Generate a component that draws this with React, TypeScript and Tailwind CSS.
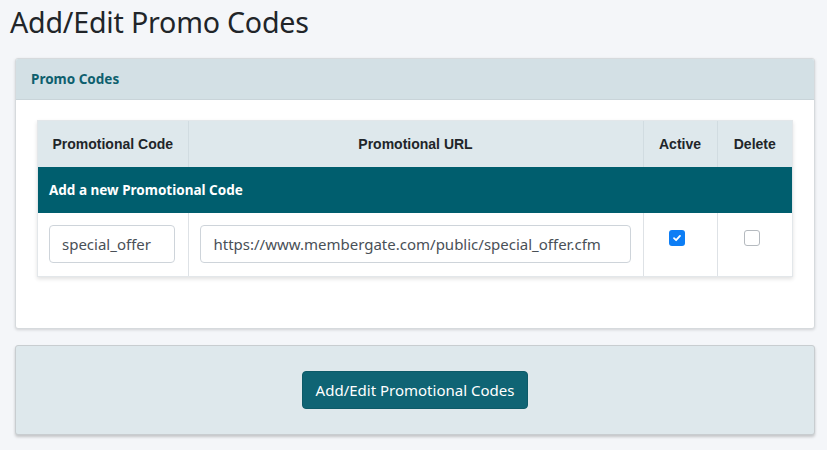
import React from "react";

const sans = { fontFamily: '"Noto Sans", "Open Sans", sans-serif' };

export default function App() {
  return (
    <div className="min-h-[450px] bg-[#f4f6f9] pt-[2px] pl-[15px] pr-[12px] pb-[14px]" style={sans}>
      <h1 className="-ml-[5px] text-[28.6px] leading-[40px] text-[#212529] tracking-[-0.2px] font-normal">Add/Edit Promo Codes</h1>

      <div className="mt-[16px] border border-[#d6dadd] rounded-[3px] bg-white shadow-[0_1px_3px_rgba(0,0,0,0.15)] overflow-hidden">
        <div className="h-[41px] bg-[#d3e0e5] border-b border-[#c9d4d9] flex items-center px-[15px]">
          <span className="text-[13.5px] font-bold text-[#0e5f6e]">Promo Codes</span>
        </div>
        <div className="px-[21px] pt-[20px] pb-[51px]">
          <div className="shadow-[0_2px_4px_rgba(0,0,0,0.12)] border border-[#e3e7ea]">
            <table className="w-full border-collapse table-fixed">
              <colgroup>
                <col className="w-[150px]" />
                <col />
                <col className="w-[74px]" />
                <col className="w-[75px]" />
              </colgroup>
              <thead>
                <tr className="h-[46px] bg-[#dee8ec] text-[#212529]" style={{ fontFamily: '"Liberation Sans", Arial, sans-serif' }}>
                  <th className="text-[14px] font-bold border-r border-[#d1dce1]">Promotional Code</th>
                  <th className="text-[14px] font-bold border-r border-[#d1dce1]">Promotional URL</th>
                  <th className="text-[14px] font-bold border-r border-[#d1dce1]">Active</th>
                  <th className="text-[14px] font-bold">Delete</th>
                </tr>
              </thead>
              <tbody>
                <tr className="h-[46px] bg-[#005e6e]">
                  <td colSpan={4} className="px-[11px] text-[13.5px] font-bold text-white">Add a new Promotional Code</td>
                </tr>
                <tr className="h-[63px] bg-white">
                  <td className="border-r border-[#dee2e6] pl-[11px] pr-[13px] align-top pt-[12px]">
                    <input
                      readOnly
                      value="special_offer"
                      className="w-full h-[38px] px-[12px] border border-[#ced4da] rounded-[4px] text-[15px] text-[#495057] outline-none"
                      style={sans}
                    />
                  </td>
                  <td className="border-r border-[#dee2e6] pl-[11px] pr-[12px] align-top pt-[12px]">
                    <input
                      readOnly
                      value="https://www.membergate.com/public/special_offer.cfm"
                      className="w-full h-[38px] px-[13px] border border-[#ced4da] rounded-[4px] text-[15px] text-[#495057] outline-none"
                      style={sans}
                    />
                  </td>
                  <td className="border-r border-[#dee2e6] align-top pt-[17px] pr-[7px]">
                    <div className="flex justify-center">
                      <span className="w-[16px] h-[16px] rounded-[3px] bg-[#0d7ef5] flex items-center justify-center">
                        <svg width="10" height="10" viewBox="0 0 10 10">
                          <path d="M2 5.2 L4.1 7.2 L8 2.9" stroke="white" strokeWidth="1.8" fill="none" strokeLinecap="round" strokeLinejoin="round" />
                        </svg>
                      </span>
                    </div>
                  </td>
                  <td className="align-top pt-[17px] pr-[6px]">
                    <div className="flex justify-center">
                      <span className="w-[16px] h-[16px] rounded-[3px] bg-white border border-[#b5babf]" />
                    </div>
                  </td>
                </tr>
              </tbody>
            </table>
          </div>
        </div>
      </div>

      <div className="mt-[16px] h-[90px] border border-[#c8cdd0] rounded-[3px] bg-[#dee8ec] shadow-[0_2px_3px_rgba(0,0,0,0.2)] flex items-center justify-center">
        <button className="h-[38px] px-[13px] rounded-[4px] bg-[#0f6474] text-white text-[15px] border border-[#0d5a68]" style={sans}>
          Add/Edit Promotional Codes
        </button>
      </div>
    </div>
  );
}
